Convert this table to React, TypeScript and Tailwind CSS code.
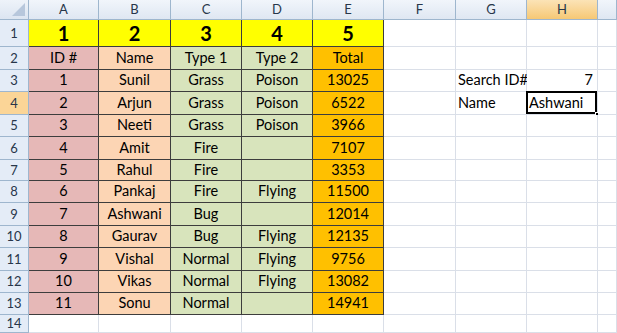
import React from "react";

const COLS = ["A", "B", "C", "D", "E", "F", "G", "H", ""];
const ROW_H = [27, 23, 22, 23, 22, 23, 21, 22, 23, 22, 23, 22, 22, 18];

const PINK = "bg-[#e6b8b7]";
const PEACH = "bg-[#fcd5b4]";
const GREEN = "bg-[#d8e4bc]";
const ORANGE = "bg-[#ffc000]";
const YELLOW = "bg-[#ffff00]";

// id, name, type1, type2, total
const DATA: [string, string, string, string, string][] = [
	["ID #", "Name", "Type 1", "Type 2", "Total"],
	["1", "Sunil", "Grass", "Poison", "13025"],
	["2", "Arjun", "Grass", "Poison", "6522"],
	["3", "Neeti", "Grass", "Poison", "3966"],
	["4", "Amit", "Fire", "", "7107"],
	["5", "Rahul", "Fire", "", "3353"],
	["6", "Pankaj", "Fire", "Flying", "11500"],
	["7", "Ashwani", "Bug", "", "12014"],
	["8", "Gaurav", "Bug", "Flying", "12135"],
	["9", "Vishal", "Normal", "Flying", "9756"],
	["10", "Vikas", "Normal", "Flying", "13082"],
	["11", "Sonu", "Normal", "", "14941"],
];

function ColHeader({ label, active }: { label: string; active?: boolean }) {
	return (
		<div
			className={
				"h-[20px] flex items-center justify-center border-r border-b border-[#9eb6ce] text-[13px] leading-none text-[#27364a] " +
				(active
					? "bg-gradient-to-b from-[#fbe3b6] to-[#f6c874]"
					: "bg-gradient-to-b from-[#f1f5fb] to-[#dfe7f2]")
			}
		>
			{label}
		</div>
	);
}

function RowHeader({ n, active }: { n: number; active?: boolean }) {
	return (
		<div
			className={
				"flex items-center justify-center border-r border-b border-[#9eb6ce] text-[13px] leading-none text-[#27364a] " +
				(active ? "bg-[#fbd597]" : "bg-[#e4ecf7]")
			}
		>
			{n}
		</div>
	);
}

function Cell({
	children,
	bg = "bg-white",
	dark,
	align = "center",
	bold,
	className = "",
}: {
	children?: React.ReactNode;
	bg?: string;
	dark?: boolean;
	align?: "center" | "left" | "right";
	bold?: boolean;
	className?: string;
}) {
	const justify =
		align === "center" ? "justify-center" : align === "left" ? "justify-start pl-[2px]" : "justify-end pr-[4px]";
	return (
		<div
			className={
				"relative flex items-center whitespace-nowrap leading-none border-r border-b " +
				(dark ? "border-[#3d3d3d] " : "border-[#dadfe8] ") +
				bg +
				" " +
				justify +
				" " +
				(bold ? "text-[20px] font-bold" : "text-[14.5px]") +
				" " +
				className
			}
		>
			{children}
		</div>
	);
}

export default function App() {
	return (
		<div
			className="w-[617px] h-[333px] overflow-hidden bg-white text-black"
			style={{ fontFamily: "Lato, 'Open Sans', sans-serif" }}
		>
			<div
				className="grid grid-cols-[29px_70px_72px_71px_71px_71px_72px_71px_71px_19px]"
				style={{ gridTemplateRows: ["20px", ...ROW_H.map((h) => h + "px")].join(" ") }}
			>
				{/* Corner */}
				<div className="border-r border-b border-[#9eb6ce] bg-gradient-to-b from-[#eef3fa] to-[#dce5f1] flex items-end justify-end p-[3px]">
					<svg width="13" height="13" viewBox="0 0 13 13">
						<polygon points="13,0 13,13 0,13" fill="#b7c7dc" />
					</svg>
				</div>
				{COLS.map((c, i) => (
					<ColHeader key={i} label={c} active={c === "H"} />
				))}

				{/* Row 1 */}
				<RowHeader n={1} />
				{["1", "2", "3", "4", "5"].map((v) => (
					<Cell key={v} bg={YELLOW} dark bold>
						{v}
					</Cell>
				))}
				<Cell />
				<Cell />
				<Cell />
				<Cell />

				{DATA.map((row, r) => {
					const rowNo = r + 2;
					return (
						<React.Fragment key={rowNo}>
							<RowHeader n={rowNo} active={rowNo === 4} />
							<Cell bg={PINK} dark>
								{row[0]}
							</Cell>
							<Cell bg={PEACH} dark>
								{row[1]}
							</Cell>
							<Cell bg={GREEN} dark>
								{row[2]}
							</Cell>
							<Cell bg={GREEN} dark>
								{row[3]}
							</Cell>
							<Cell bg={ORANGE} dark>
								{row[4]}
							</Cell>
							<Cell />
							<Cell align="left">
								{rowNo === 3 ? "Search ID#" : rowNo === 4 ? "Name" : ""}
							</Cell>
							{rowNo === 3 ? (
								<Cell align="right">7</Cell>
							) : rowNo === 4 ? (
								<Cell align="left">
									Ashwani
									<div className="absolute -left-[1px] -top-[1px] right-0 bottom-0 border-2 border-black" />
									<div className="absolute -right-[3px] -bottom-[3px] w-[5px] h-[5px] bg-black border border-white" />
								</Cell>
							) : (
								<Cell />
							)}
							<Cell />
						</React.Fragment>
					);
				})}

				{/* Row 14 */}
				<RowHeader n={14} />
				{Array.from({ length: 9 }).map((_, i) => (
					<Cell key={i} />
				))}
			</div>
		</div>
	);
}
